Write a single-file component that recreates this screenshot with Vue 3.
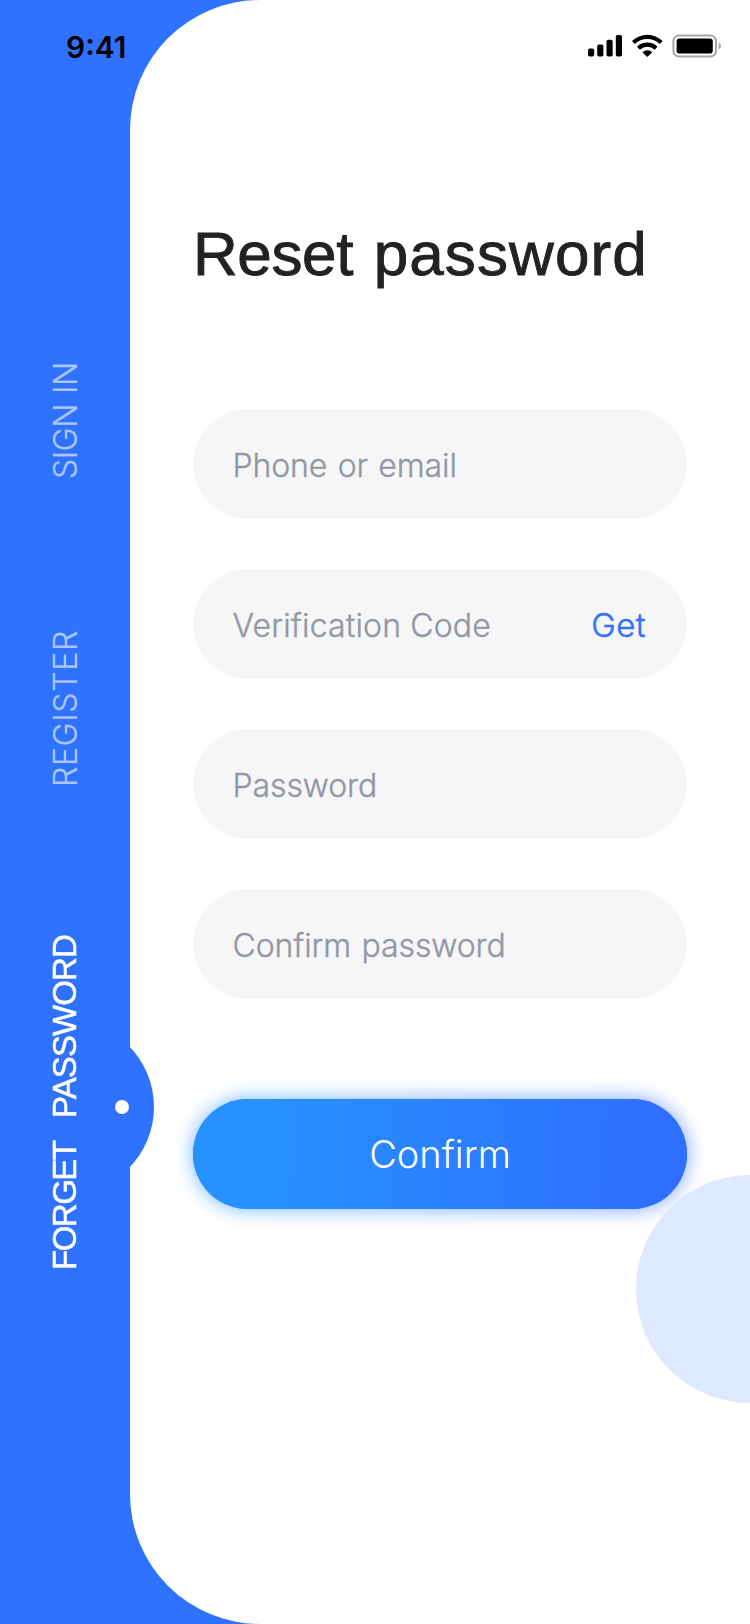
<script setup>
import { reactive } from 'vue'

const tabs = [
  { id: 'sign-in', words: ['SIGN', 'IN'] },
  { id: 'register', words: ['REGISTER'] },
  { id: 'forget', words: ['FORGET', 'PASSWORD'], active: true }
]
const fields = [
  { id: 'account', hint: 'Phone or email' },
  { id: 'code', hint: 'Verification Code', action: 'Get' },
  { id: 'password', hint: 'Password' },
  { id: 'confirm', hint: 'Confirm password' }
]
const form = reactive({ account: '', code: '', password: '', confirm: '' })
</script>

<template>
  <div class="screen">
    <nav class="side">
      <a v-for="t in tabs" :key="t.id" class="tab" :class="[t.id, { active: t.active }]">
        <span v-for="w in t.words" :key="w">{{ w }}</span>
      </a>
    </nav>

    <main class="panel">
      <h1><span class="verb">Reset</span> <span class="noun">password</span></h1>
      <form @submit.prevent>
        <label v-for="f in fields" :key="f.id" class="field" :class="f.id">
          <input v-model="form[f.id]" :placeholder="f.hint" />
          <button v-if="f.action" type="button" class="get">{{ f.action }}</button>
        </label>
        <button class="submit">Confirm</button>
      </form>
    </main>

    <div class="bump"><i></i></div>
    <div class="bubble"></div>

    <header class="status">
      <time>9:41</time>
      <svg width="136" height="26" viewBox="586 33 136 26">
        <rect x="588" y="48.6" width="6.2" height="8" rx="1.8" />
        <rect x="597.2" y="44.6" width="6.2" height="12" rx="1.8" />
        <rect x="606.5" y="39.8" width="6.2" height="16.8" rx="1.8" />
        <rect x="615.8" y="35" width="6.2" height="21.6" rx="1.8" />
        <path d="M632 41 A22 22 0 0 1 662.6 41 L659.8 44 A18 18 0 0 0 634.8 44 Z" />
        <path d="M637 46.7 A14.6 14.6 0 0 1 657.5 46.7 L654.6 49.7 A10.6 10.6 0 0 0 640 49.7 Z" />
        <path d="M642.4 52.2 A7.2 7.2 0 0 1 652.2 52.2 L647.9 56.6 Q647.3 57 646.7 56.6 Z" />
        <rect x="673.4" y="35.5" width="42.6" height="21" rx="5.6" fill="none" stroke="#a6a6a6" stroke-width="2" />
        <rect x="676.6" y="38.6" width="36.2" height="14.9" rx="2.8" />
        <path d="M718.8 42.2 A4.2 4.2 0 0 1 718.8 49.6 Z" fill="#a6a6a6" />
      </svg>
    </header>
  </div>
</template>

<style>
html, body { background: #2f72ff; }
</style>

<style scoped>
.screen {
  position: relative;
  display: flex;
  width: 750px;
  height: 1624px;
  overflow: hidden;
  background: #2f72ff;
  font-family: Inter, "Liberation Sans", sans-serif;
  font-weight: 300;
}
.side {
  display: flex;
  flex-direction: column;
  width: 130px;
  box-sizing: border-box;
  padding-top: 359px;
}
.tab {
  display: flex;
  gap: 10px;
  writing-mode: vertical-rl;
  transform: rotate(180deg);
  width: 40px;
  height: 120px;
  margin-left: 46px;
  line-height: 40px;
  font-size: 32px;
  letter-spacing: -.4px;
  color: #acc7ff;
  -webkit-text-stroke: .3px #acc7ff;
  white-space: nowrap;
}
.register {
  height: 160px;
  margin-top: 148px;
  letter-spacing: .7px;
}
.forget {
  height: 340px;
  margin: 143px 0 0 45px;
  gap: 23px;
  font: 400 33px/40px "Liberation Sans", sans-serif;
  color: #fff;
  -webkit-text-stroke: .5px #fff;
}
.forget span { letter-spacing: -1.5px; }
.forget span + span { letter-spacing: -.9px; }
.panel {
  flex: 1;
  box-sizing: border-box;
  padding: 218px 63px 0;
  border-radius: 130px 0 0 130px;
  background: #fff;
}
h1 {
  margin: 0;
  height: 72px;
  font: 400 62px/72px "Liberation Sans", sans-serif;
  color: #222;
  -webkit-text-stroke: .9px #222;
  word-spacing: 3.5px;
  white-space: nowrap;
}
.verb { letter-spacing: -.4px; }
.noun { letter-spacing: 1.1px; }
form {
  display: flex;
  flex-direction: column;
  gap: 50px;
  width: 494px;
  margin-top: 119px;
}
.field {
  display: flex;
  align-items: center;
  box-sizing: border-box;
  height: 110px;
  padding: 2px 41px 0 39.5px;
  border-radius: 55px;
  background: #f6f6f6;
}
input {
  flex: 1;
  min-width: 0;
  padding: 0;
  border: 0;
  outline: 0;
  background: none;
  font: inherit;
  font-size: 32px;
  letter-spacing: -.1px;
  height: 44px;
  color: #222;
}
input::placeholder {
  color: #9298a5;
  opacity: 1;
  -webkit-text-stroke: .4px #9298a5;
}
.account input { word-spacing: 1.5px; }
.code input { letter-spacing: .15px; }
.confirm input { word-spacing: 1.5px; }
.get {
  padding: 0;
  border: 0;
  background: none;
  font: 300 33px/44px Inter, sans-serif;
  letter-spacing: .4px;
  color: #2f72ff;
  -webkit-text-stroke: .5px #2f72ff;
}
.submit {
  position: relative;
  height: 110px;
  margin-top: 50px;
  padding: 0;
  border: 0;
  border-radius: 55px;
  background: linear-gradient(93deg, #2691ff 15%, #2f6fff 92%);
  font: 300 38px/50px Inter, sans-serif;
  color: #fff;
  isolation: isolate;
}
.submit::before, .submit::after {
  content: "";
  position: absolute;
  inset: 0;
  z-index: -1;
  border-radius: 55px;
  background: linear-gradient(93deg, #2691ff 15%, #2f6fff 92%);
}
.submit::before {
  filter: blur(10px);
  opacity: .65;
}
.bump {
  position: absolute;
  left: -20px;
  top: 1020px;
  width: 174px;
  height: 174px;
  border-radius: 50%;
  background: #2f72ff;
  clip-path: inset(0 0 0 130px);
}
.bump i {
  position: absolute;
  left: 135px;
  top: 80px;
  width: 14px;
  height: 14px;
  border-radius: 50%;
  background: #fff;
}
.bubble {
  position: absolute;
  left: 636px;
  top: 1175px;
  width: 228px;
  height: 228px;
  border-radius: 50%;
  background: #dee9ff;
}
.status {
  position: absolute;
  inset: 0 0 auto;
  display: flex;
  justify-content: space-between;
  align-items: flex-start;
  padding: 33px 28px 0 66px;
}
time {
  margin-top: -1px;
  font: 600 30px/30px Inter, sans-serif;
  color: #000;
}
</style>
